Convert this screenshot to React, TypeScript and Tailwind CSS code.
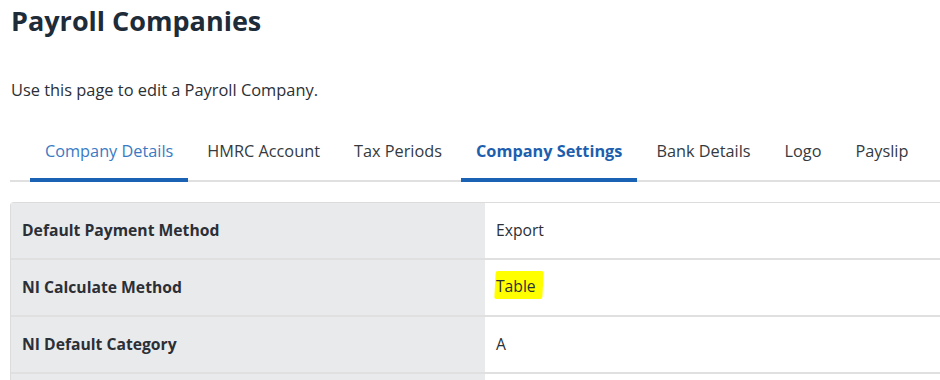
import React from "react";

const tabs = [
  { label: "Company Details", state: "visited" },
  { label: "HMRC Account", state: "" },
  { label: "Tax Periods", state: "" },
  { label: "Company Settings", state: "active" },
  { label: "Bank Details", state: "" },
  { label: "Logo", state: "" },
  { label: "Payslip", state: "" },
];

const rows = [
  { label: "Default Payment Method", value: "Export" },
  { label: "NI Calculate Method", value: "Table", marked: true },
  { label: "NI Default Category", value: "A" },
  { label: "", value: "" },
];

const App = () => {
  return (
    <div
      className="w-[940px] h-[380px] overflow-hidden bg-white text-[#2b2f36]"
      style={{ fontFamily: '"Open Sans", "Liberation Sans", sans-serif' }}
    >
      <h1 className="pl-[11px] pt-[3px] text-[27px] leading-[36px] font-bold text-[#1e2b38]">
        Payroll Companies
      </h1>
      <p className="pl-[11px] mt-[40px] text-[16.4px] leading-[22px] text-[#2b2f36]">
        Use this page to edit a Payroll Company.
      </p>

      <div className="ml-[10px] mt-[22px] flex pl-[20px] gap-[4px] border-b-2 border-[#e0e0e0]">
        {tabs.map((tab) => (
          <div
            key={tab.label}
            className={
              "px-[15px] pt-[17px] h-[59px] text-[16.3px] leading-[22px] border-b-4 -mb-[2px] " +
              (tab.state === "active"
                ? "font-bold text-[#1d5fae] border-[#1a62b4]"
                : tab.state === "visited"
                ? "text-[#3a7ac4] border-[#1a62b4]"
                : "text-[#343a40] border-transparent")
            }
          >
            {tab.label}
          </div>
        ))}
      </div>

      <div className="ml-[10px] mt-[20px] border border-[#dcdcdc] rounded-tl-[4px] border-r-0">
        {rows.map((row, i) => (
          <div
            key={i}
            className={
              "flex text-[15.7px] leading-[22px] " +
              (i > 0 ? "h-[57px] border-t-2 border-[#e0e0e0]" : "h-[55px]")
            }
          >
            <div className="w-[474px] bg-[#e9eaec] pl-[11px] pb-[2px] flex items-center font-bold text-[#2b2f36]">
              {row.label}
            </div>
            <div className="flex-1 pl-[11px] pb-[2px] flex items-center text-[#2b2f36]">
              {row.marked ? (
                <span className="bg-[#ffff00] pl-[1px] pr-[7px] pt-[4px] pb-[2px] -ml-[1px] -mt-[3px] rounded-[2px] -skew-x-3">
                  <span className="inline-block skew-x-3">{row.value}</span>
                </span>
              ) : (
                row.value
              )}
            </div>
          </div>
        ))}
      </div>
    </div>
  );
};

export default App;
